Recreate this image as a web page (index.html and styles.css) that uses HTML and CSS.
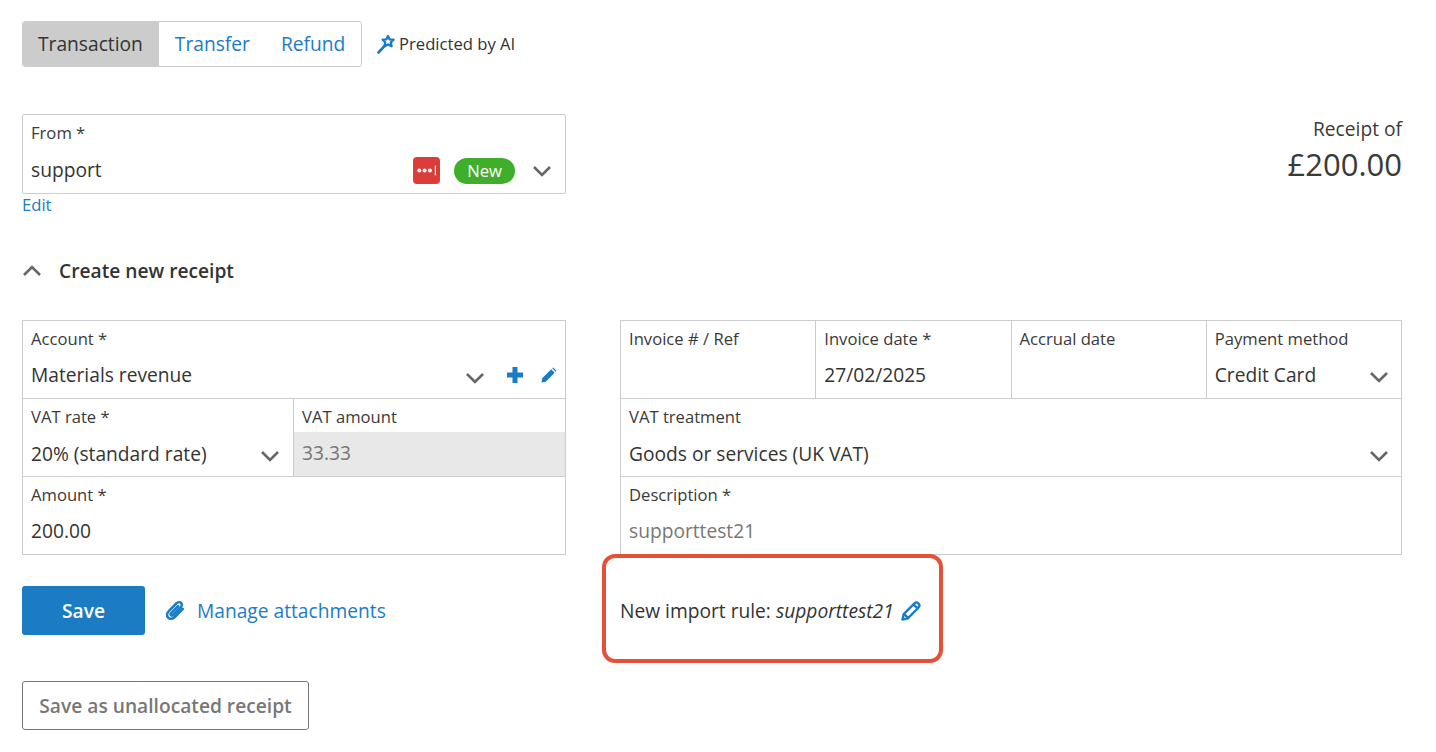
FILE: index.html
```html
<!DOCTYPE html>
<html lang="en">
<head>
<meta charset="utf-8">
<title>Transaction</title>
<link rel="stylesheet" href="styles.css">
</head>
<body>
<div class="top">
  <div class="tabs">
    <span class="tab active">Transaction</span>
    <span class="tab">Transfer</span>
    <span class="tab">Refund</span>
  </div>
  <div class="ai">
    <svg class="wand" viewBox="0 0 18 20"><path d="M1.500 18.500 8 11.500" fill="none" stroke="#1b7cc4" stroke-width="2.600" stroke-linecap="round"/><path d="M11 2 12.600 5.400 16.600 5.700 13.800 8.400 14.600 12.300 11 10.400 7.600 12.200 8.200 8.300 5.600 5.600 9.400 5.300Z" fill="#fff" stroke="#1b7cc4" stroke-width="2.300" stroke-linejoin="round"/></svg>
    <span>Predicted by AI</span>
  </div>
</div>

<div class="from-row">
  <div class="from-col">
    <div class="box from-box">
      <div class="label">From *</div>
      <div class="value-row">
        <span class="value">support</span>
        <span class="from-icons">
          <span class="pw"><svg viewBox="0 0 28 26"><circle cx="6.500" cy="13" r="2.100" fill="#fff"/><circle cx="12" cy="13" r="2.100" fill="#fff"/><circle cx="17.500" cy="13" r="2.100" fill="#fff"/><rect x="22.600" y="8" width="1.200" height="10" fill="#fff"/></svg></span>
          <span class="badge">New</span>
          <svg class="chev" viewBox="0 0 20 12"><path d="M2 2 10 10 18 2" fill="none" stroke="#666" stroke-width="2.600"/></svg>
        </span>
      </div>
    </div>
    <a class="edit">Edit</a>
  </div>
  <div class="total">
    <div class="total-label">Receipt of</div>
    <div class="total-amount">£200.00</div>
  </div>
</div>

<div class="section">
  <svg class="chev up" viewBox="0 0 20 12"><path d="M2 10 10 2 18 10" fill="none" stroke="#666" stroke-width="2.600"/></svg>
  <span>Create new receipt</span>
</div>

<div class="grid">
  <div class="box">
    <div class="row">
      <div class="cell">
        <div class="label">Account *</div>
        <div class="value-row">
          <span class="value">Materials revenue</span>
          <span class="acc-icons">
            <svg class="chev" viewBox="0 0 20 12"><path d="M2 2 10 10 18 2" fill="none" stroke="#666" stroke-width="2.600"/></svg>
            <svg class="plus" viewBox="0 0 16 16"><path d="M8 0V16M0 8H16" stroke="#1b7cc4" stroke-width="5"/></svg>
            <svg class="pen" viewBox="0 0 16 16"><path d="M0.500 15.500 1.200 11.300 10.200 2.300 13.700 5.800 4.700 14.800ZM11.200 1.300 12.200 0.500 15.500 3.800 14.700 4.800Z" fill="#1b7cc4"/></svg>
          </span>
        </div>
      </div>
    </div>
    <div class="row mid">
      <div class="cell rate">
        <div class="label">VAT rate *</div>
        <div class="value-row">
          <span class="value">20% (standard rate)</span>
          <svg class="chev" viewBox="0 0 20 12"><path d="M2 2 10 10 18 2" fill="none" stroke="#666" stroke-width="2.600"/></svg>
        </div>
      </div>
      <div class="cell disabled">
        <div class="label">VAT amount</div>
        <div class="disabled-value">33.33</div>
      </div>
    </div>
    <div class="row">
      <div class="cell">
        <div class="label">Amount *</div>
        <div class="value-row"><span class="value">200.00</span></div>
      </div>
    </div>
  </div>

  <div class="box">
    <div class="row">
      <div class="cell">
        <div class="label">Invoice # / Ref</div>
      </div>
      <div class="cell">
        <div class="label">Invoice date *</div>
        <div class="value-row"><span class="value">27/02/2025</span></div>
      </div>
      <div class="cell">
        <div class="label">Accrual date</div>
      </div>
      <div class="cell">
        <div class="label">Payment method</div>
        <div class="value-row">
          <span class="value">Credit Card</span>
          <svg class="chev" viewBox="0 0 20 12"><path d="M2 2 10 10 18 2" fill="none" stroke="#666" stroke-width="2.600"/></svg>
        </div>
      </div>
    </div>
    <div class="row mid">
      <div class="cell">
        <div class="label">VAT treatment</div>
        <div class="value-row">
          <span class="value">Goods or services (UK VAT)</span>
          <svg class="chev" viewBox="0 0 20 12"><path d="M2 2 10 10 18 2" fill="none" stroke="#666" stroke-width="2.600"/></svg>
        </div>
      </div>
    </div>
    <div class="row">
      <div class="cell">
        <div class="label">Description *</div>
        <div class="value-row"><span class="value muted">supporttest21</span></div>
      </div>
    </div>
  </div>

  <div class="actions">
    <button class="save">Save</button>
    <a class="attach">
      <svg class="clip" viewBox="0 0 20 20"><path d="M17 8.500 9.300 16.200C7.400 18.100 4.600 18.300 3 16.700S1.700 12.400 3.600 10.500L11 3.100C12.300 1.800 14.200 1.700 15.300 2.800S16.200 5.700 14.900 7L7.800 14.100C7.100 14.800 6.200 14.900 5.700 14.400S5.400 13 6.100 12.300L12.500 5.900" fill="none" stroke="#1b7cc4" stroke-width="2.400" stroke-linecap="round"/></svg>
      <span>Manage attachments</span>
    </a>
  </div>
  <div class="rule-wrap">
    <div class="rule">
      <span>New import rule: <em>supporttest21</em></span>
      <svg class="pen-outline" viewBox="0 0 20 20"><path d="M1.500 18.500 2.700 13.200 12.500 3.400 16.600 7.500 6.800 17.300ZM3.200 13 7 16.800M13.800 2.100C14.800 1.100 16.100 1.100 17.300 2.300S18.900 4.700 17.900 5.700L16.600 7.500 12.500 3.400Z" fill="none" stroke="#1b7cc4" stroke-width="2.400" stroke-linejoin="round"/></svg>
    </div>
  </div>
</div>

<button class="secondary">Save as unallocated receipt</button>
</body>
</html>
```
FILE: styles.css
```css
*, *::before { box-sizing: border-box; }
html, body { margin: 0; height: 100%; }
body {
  padding: 21px 34px 0 22px;
  font-family: "Open Sans", sans-serif;
  color: #333;
  background: #fff;
  overflow: hidden;
}
.top { display: flex; align-items: center; height: 46px; }
.tabs {
  display: flex;
  width: 340px;
  height: 46px;
  border: 1px solid #ccc;
  border-radius: 3px;
  overflow: hidden;
  font-size: 19.200px;
}
.tab { display: flex; align-items: center; color: #1b7cc4; padding: 0 15px 1px 16px; }
.tab.active { background: #ccc; color: #333; padding: 0 16px 1px 15px; }
.ai { display: flex; align-items: center; margin-left: 15px; gap: 4px; font-size: 16.640px; line-height: 22px; margin-top: -1px; }
.wand { width: 18px; height: 20px; margin-top: 1px; }
.from-row { display: flex; justify-content: space-between; margin-top: 47px; }
.from-col { width: 544px; }
.box { border: 1px solid #ccc; }
.from-box { height: 80px; padding: 7px 8px 0; border-radius: 2px; }
.label { font-size: 16.640px; line-height: 22px; color: #3a3a3a; }
.value-row { display: flex; align-items: center; justify-content: space-between; margin-top: 12px; height: 26px; }
.from-box .value-row { margin-top: 13px; }
.value { font-size: 19.200px; line-height: 26px; }
.muted { color: #777; }
.from-icons { display: flex; align-items: center; }
.pw { width: 27px; height: 27px; border-radius: 4px; background: #db3e3a; display: block; }
.pw svg { display: block; width: 27px; height: 27px; }
.badge { margin-left: 14px; width: 61px; height: 26px; border-radius: 13px; background: #3fae2a; color: #fff; font-size: 16.640px; line-height: 26px; text-align: center; margin-top: 1px; }
.chev { width: 20px; height: 12px; flex: none; }
.from-icons .chev { margin: 2px 5px 0 17px; }
.edit { display: block; font-size: 16.640px; line-height: 22px; color: #1b7cc4; }
.total { text-align: right; margin-top: 2px; }
.total-label { font-size: 19.200px; line-height: 26px; color: #3a3a3a; }
.total-amount { font-size: 31px; line-height: 42px; color: #3a3a3a; margin-top: 1px; }
.section { display: flex; align-items: center; margin-top: 41px; font-size: 19.200px; font-weight: 600; line-height: 28px; }
.section .up { margin-right: 17px; }
.grid { display: grid; grid-template-columns: 544px 782px; column-gap: 54px; margin-top: 35px; }
.grid > .box { height: 235px; }
.row { display: flex; height: 78px; border-top: 1px solid #ccc; }
.row:first-child { height: 77px; border-top: 0; }
.mid .value-row { margin-top: 13px; }
.cell { flex: 1 1 0; min-width: 0; padding: 7px 8px 0; border-left: 1px solid #ccc; }
.cell:first-child { border-left: 0; }
.rate { flex: none; width: 270px; }
.disabled { display: flex; flex-direction: column; padding: 0; }
.disabled .label { padding: 7px 8px 0; height: 33px; flex: none; }
.disabled-value { flex: 1; background: #e8e8e8; color: #777; font-size: 19.200px; line-height: 42px; padding-left: 8px; }
.acc-icons { display: flex; align-items: center; }
.plus { width: 16px; height: 16px; margin-left: 22px; }
.pen { width: 16px; height: 16px; margin-left: 18px; }
.acc-icons .chev { margin-top: 5px; }
.cell > .value-row > .chev { margin: 4px 4px 0 0; }
.rate > .value-row > .chev { margin-right: 5px; }
.actions { display: flex; align-items: center; height: 49px; margin-top: 31px; }
.save { width: 123px; height: 49px; border: 0; border-radius: 3px; background: #1b7cc4; color: #fff; font: 600 19.200px "Open Sans", sans-serif; }
.attach { display: flex; align-items: center; margin-left: 20px; font-size: 19.200px; color: #1b7cc4; }
.clip { width: 21px; height: 21px; margin-right: 11px; }
.rule-wrap { position: relative; margin-top: 31px; height: 49px; display: flex; align-items: center; }
.rule { display: flex; align-items: center; gap: 7px; font-size: 19.200px; }
.rule::before { content: ""; position: absolute; left: -18px; top: -32px; width: 341px; height: 109px; border: 4px solid #e55039; border-radius: 13px; }
.pen-outline { width: 20px; height: 20px; }
.secondary { display: block; margin-top: 46px; width: 287px; height: 49px; border: 1px solid #777; border-radius: 3px; background: #fff; color: #777; font: 600 19.200px "Open Sans", sans-serif; }
```
